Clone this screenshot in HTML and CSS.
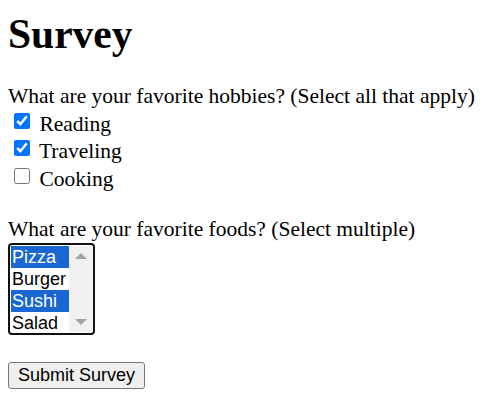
FILE: index.html
```html
<!DOCTYPE html>
<html lang="en">
<head>
    <meta charset="UTF-8">
    <meta name="viewport" content="width=device-width, initial-scale=1.0">
    <title>Survey</title>
    <link rel="stylesheet" href="styles.css">
</head>
<body>
    <h1>Survey</h1>
    <form class="survey-form">
        <p class="question">What are your favorite hobbies? (Select all that apply)</p>
        <div class="hobbies">
            <label class="hobby"><input type="checkbox" name="hobby" value="reading" checked> Reading</label>
            <label class="hobby"><input type="checkbox" name="hobby" value="traveling" checked> Traveling</label>
            <label class="hobby"><input type="checkbox" name="hobby" value="cooking"> Cooking</label>
        </div>

        <p class="question foods-question">What are your favorite foods? (Select multiple)</p>
        <div class="listbox">
            <ul class="listbox-options">
                <li class="selected">Pizza</li>
                <li>Burger</li>
                <li class="selected">Sushi</li>
                <li>Salad</li>
            </ul>
            <div class="listbox-scroll">
                <span class="arrow-up"></span>
                <span class="arrow-down"></span>
            </div>
        </div>

        <button type="submit" class="submit-btn">Submit Survey</button>
    </form>
</body>
</html>
```

FILE: styles.css
```css
body {
    font-family: "Liberation Serif", "Times New Roman", serif;
    font-size: 21.5px;
    margin: 0 8px;
    color: #000;
    background-color: #fff;
}
h1 {
    font-size: 41.5px;
    font-weight: bold;
    margin: 11px 0 28px 0;
    line-height: 46px;
}
.question {
    margin: 0;
    line-height: 23px;
}
.hobbies {
    padding-top: 2.5px;
}
.hobby {
    display: block;
    line-height: 27.5px;
}
.hobby input {
    width: 16px;
    height: 16px;
    margin: 0 4px 0 6px;
    vertical-align: 2px;
}
.foods-question {
    margin-top: 24.5px;
}
.listbox {
    display: flex;
    width: 83px;
    height: 86px;
    margin-top: 2px;
    border: 2px solid #111;
    border-radius: 4px;
    padding: 1px 0;
    font-family: "Liberation Sans", Arial, sans-serif;
    font-size: 18px;
}
.listbox-options {
    list-style: none;
    margin: 0;
    padding: 0 0 0 1px;
    width: 58px;
}
.listbox-options li {
    height: 22px;
    line-height: 22px;
    padding-left: 1px;
}
.listbox-options .selected {
    background-color: #1967d2;
    color: #fff;
}
.listbox-scroll {
    flex: 1;
    background-color: #f1f1f1;
    display: flex;
    flex-direction: column;
    justify-content: space-between;
    align-items: center;
    padding: 7px 0;
}
.arrow-up,
.arrow-down {
    width: 0;
    height: 0;
    border-left: 6px solid transparent;
    border-right: 6px solid transparent;
}
.arrow-up {
    border-bottom: 6px solid #a3a3a3;
}
.arrow-down {
    border-top: 6px solid #a3a3a3;
}
.submit-btn {
    display: block;
    margin-top: 27px;
    width: 137px;
    height: 27px;
    font-family: "Liberation Sans", Arial, sans-serif;
    font-size: 18px;
    color: #000;
    background-color: #efefef;
    border: 1px solid #767676;
    border-radius: 3px;
    padding: 0;
}
```
